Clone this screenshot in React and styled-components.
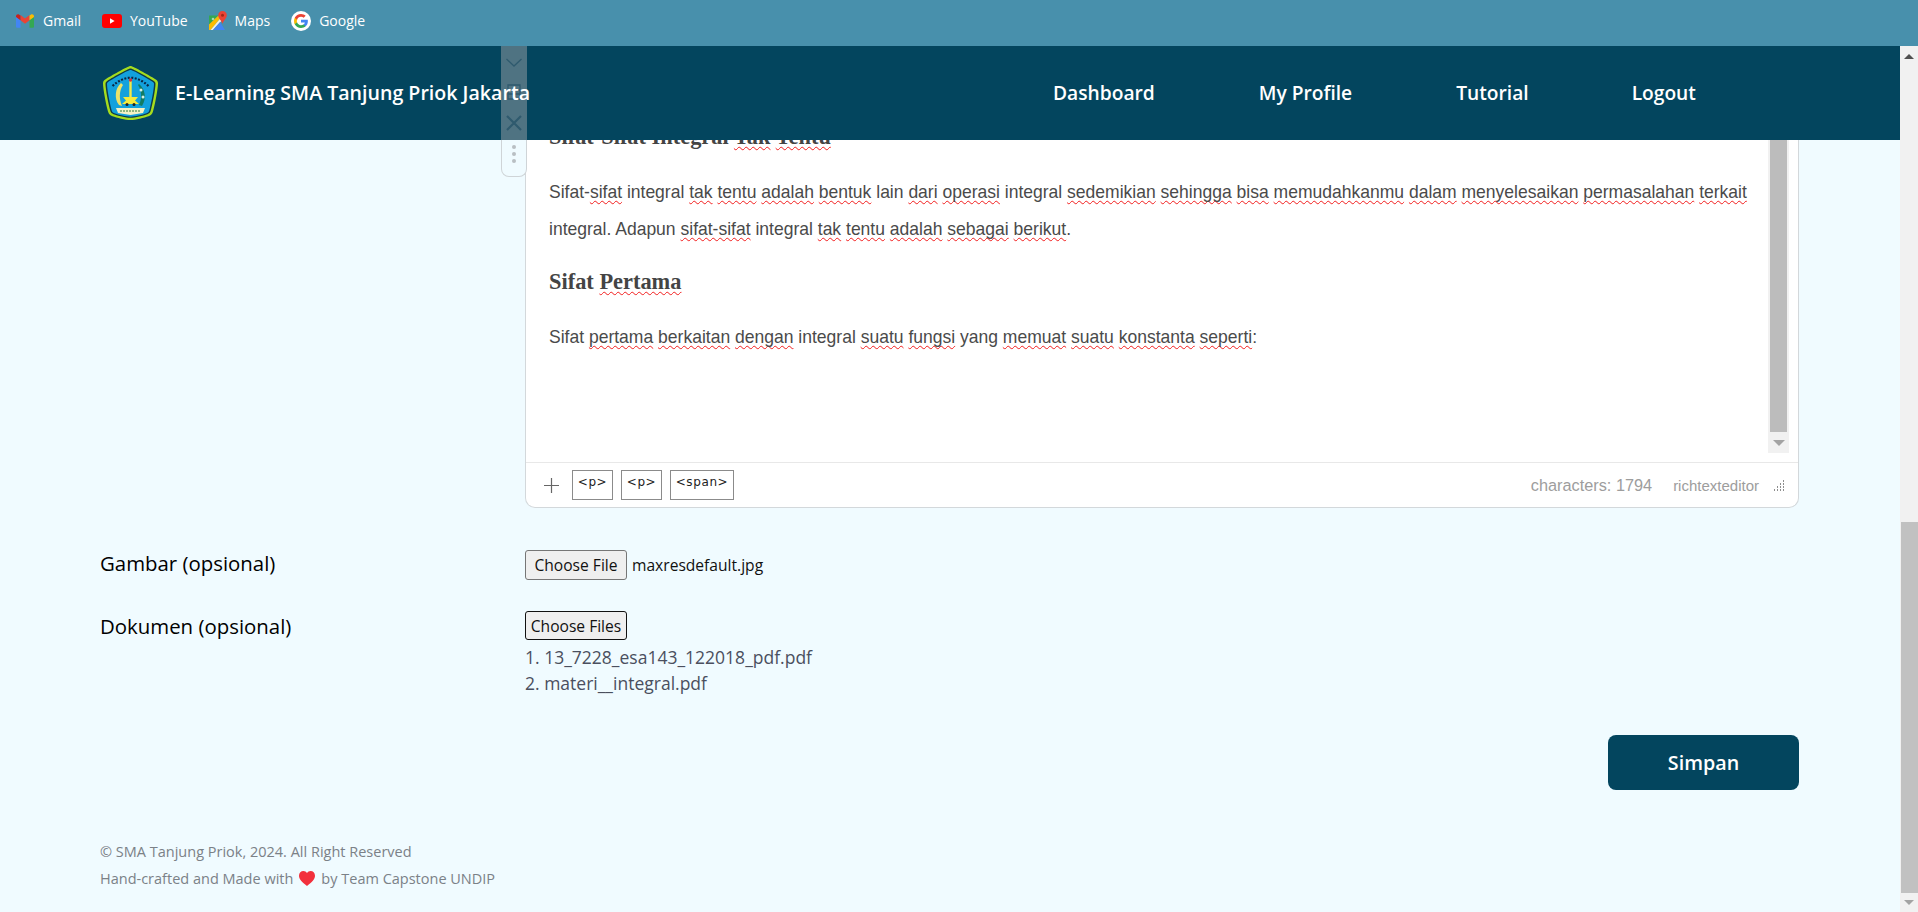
import React from "react";
import styled, { createGlobalStyle } from "styled-components";

const Global = createGlobalStyle`
  html, body { margin: 0; padding: 0; height: 100%; overflow: hidden; }
  body { font-family: "Open Sans", sans-serif; background: #f0fbff; }
  * { box-sizing: border-box; }
`;
const Shell = styled.div`display:flex;flex-direction:column;height:912px;width:1918px;position:relative;overflow:hidden;`;
const Bookmarks = styled.div`height:46px;background:#4890ac;display:flex;align-items:center;padding:0 0 5px 16px;flex:none;`;
const Bookmark = styled.div`display:flex;align-items:center;gap:${p=>p.$gap||8}px;margin-right:${p=>p.$mr||21}px;color:#fff;font:400 14px "Open Sans",sans-serif;`;
const Viewport = styled.div`flex:1;display:flex;min-height:0;`;
const Page = styled.div`width:1900px;display:flex;flex-direction:column;min-height:0;`;
const PageBar = styled.div`width:18px;background:#f1f1f1;display:flex;flex-direction:column;align-items:flex-end;`;
const BarArrow = styled.div`height:${p=>p.$h}px;width:100%;display:flex;align-items:center;justify-content:center;flex:none;`;
const Tri = styled.div`width:0;height:0;border-left:${p=>p.$s||5}px solid transparent;border-right:${p=>p.$s||5}px solid transparent;${p=>p.$up?`border-bottom:${p.$t||5}px solid ${p.$c||"#505050"};`:`border-top:${p.$t||5}px solid ${p.$c||"#a3a3a3"};`}`;
const BarGap = styled.div`flex:1;`;
const BarThumb = styled.div`width:17px;height:371px;background:#c1c1c1;flex:none;`;
const Nav = styled.nav`height:94px;background:#03455e;display:flex;align-items:center;padding-left:103px;flex:none;position:relative;`;
const Title = styled.div`margin:-2px 0 0 17px;color:#fff;font:600 19.6px "Open Sans",sans-serif;white-space:nowrap;position:relative;z-index:3;width:354px;`;
const NavLinks = styled.div`display:flex;margin:-2px 0 0 524px;`;
const NavLink = styled.a`color:#fff;font:600 19.2px "Open Sans",sans-serif;margin-right:${p=>p.$mr}px;white-space:nowrap;`;
const Main = styled.main`flex:1;min-height:0;overflow:hidden;padding:0 101px 0 100px;`;
const Row = styled.div`display:grid;grid-template-columns:425px 1fr;margin-top:${p=>p.$mt||0}px;`;
const Label = styled.div`color:#000;font:500 20.4px/28px "Open Sans",sans-serif;margin-top:${p=>p.$mt||0}px;`;
const Editor = styled.div`height:368px;background:#fff;border:1px solid #d3d8db;border-top:none;border-radius:0 0 10px 10px;display:flex;flex-direction:column;overflow:hidden;`;
const EditorBody = styled.div`flex:1;min-height:0;display:flex;padding:0 9px 9px 23px;border-bottom:1px solid #e8e8e8;`;
const EditorText = styled.div`flex:1;min-width:0;overflow:hidden;color:#4a4a4a;font:400 17.52px/36.8px "Liberation Sans",Arial,sans-serif;padding-right:18px;`;
const CutHeading = styled.h2`margin:-17px 0 0;color:#444;font:700 22.4px/28px "Liberation Serif",serif;`;
const SubHeading = styled.h3`margin:16px 0 0;color:#444;font:700 22.4px/36px "Liberation Serif",serif;`;
const Para = styled.p`margin:${p=>p.$mt}px 0 0;`;
const Wavy = styled.span`text-decoration:underline wavy #f21d1d 1px;text-underline-offset:2px;text-decoration-skip-ink:none;`;
const EditorBar = styled.div`width:21px;background:#f1f1f1;display:flex;flex-direction:column;align-items:center;flex:none;`;
const EditorThumb = styled.div`width:17px;flex:1;background:#bcbcbc;`;
const EditorFoot = styled.div`height:44px;display:flex;align-items:center;padding:0 13px 0 18px;`;
const Plus = styled.div`width:15px;height:15px;margin-right:13px;flex:none;display:flex;`;
const Tag = styled.div`height:30px;width:${p=>p.$w}px;margin-right:8px;border:1px solid #8b8b8b;font:400 12px/22px "DejaVu Sans",sans-serif;letter-spacing:.6px;color:#222;text-align:center;`;
const Spacer = styled.div`flex:1;`;
const Count = styled.div`color:#9d9d9d;font:400 16.3px "Liberation Sans",Arial,sans-serif;margin:1px 21px 0 0;`;
const Brand = styled.div`color:#9d9d9d;font:400 15px "Liberation Sans",Arial,sans-serif;margin-right:14px;`;
const Grip = styled.svg`width:12px;height:12px;flex:none;`;
const FileLine = styled.div`display:flex;align-items:center;gap:5px;`;
const FileBtn = styled.button`width:102px;height:${p=>p.$h}px;padding:0;border-radius:3px;background:#efefef;color:#111;border:${p=>p.$focus?"1.5px solid #111":"1px solid #767676"};font:400 15.6px "Open Sans",sans-serif;`;
const FileName = styled.span`color:#111;font:400 15.6px "Open Sans",sans-serif;`;
const FileList = styled.div`color:#4a4f5e;font:400 17.5px/25.5px "Open Sans",sans-serif;margin-top:5px;`;
const Actions = styled.div`display:flex;justify-content:flex-end;margin-top:39px;`;
const Save = styled.button`width:191px;height:55px;background:#03455e;border:none;border-radius:8px;color:#fff;font:600 19.7px "Open Sans",sans-serif;`;
const Footer = styled.footer`margin-top:48px;color:#7b8187;font:400 14.5px/27px "Open Sans",sans-serif;`;
const FootLine = styled.div`display:flex;align-items:center;`;
const Heart = styled.svg`width:16px;height:15px;margin:0 6px;flex:none;`;
const FloatBar = styled.div`position:absolute;left:501px;top:46px;width:26px;height:131px;z-index:2;display:flex;flex-direction:column;`;
const FloatTop = styled.div`height:94px;background:#4f7382;display:flex;flex-direction:column;align-items:center;`;
const FloatBottom = styled.div`flex:1;background:#f0fbff;border:1px solid #cfd4d7;border-top:none;border-radius:0 0 8px 8px;display:flex;flex-direction:column;align-items:center;gap:3px;padding-top:5px;`;
const Dot = styled.div`width:4px;height:4px;border-radius:50%;background:#b9bfc3;`;
const FloatIcon = styled.svg`width:18px;height:${p=>p.$h}px;margin-top:${p=>p.$mt||0}px;flex:none;`;

const Spell = ({ t }) => t.split(/(~[^~]+~)/).map((s, i) => s.startsWith("~") ? <Wavy key={i}>{s.slice(1, -1)}</Wavy> : s);

const Gmail = () => <svg width="18" height="14" viewBox="0 0 24 18"><path fill="#4285f4" d="M0 3v13.2C0 17.2.8 18 1.8 18H6V8z"/><path fill="#34a853" d="M18 8v10h4.2c1 0 1.8-.8 1.8-1.8V3z"/><path fill="#ea4335" d="M6 8V1L12 5.500 18 1v7l-6 4.500z"/><path fill="#c5221f" d="M0 2.700C0 .5 2.500-.8 4.300.6L6 1.800V8L0 3.500z"/><path fill="#fbbc04" d="M18 1.800 19.700.6C21.500-.8 24 .5 24 2.700v.8L18 8z"/></svg>;
const YouTube = () => <svg width="20" height="14" viewBox="0 0 20 14"><rect width="20" height="14" rx="3" fill="#f00"/><path fill="#fff" d="M8 4.300v5.400L12.600 7z"/></svg>;
const Maps = () => <svg width="18" height="20" viewBox="0 0 18 20"><path fill="#34a853" d="M0 4.500h9.500L0 13.500z"/><circle cx="4" cy="8" r="1.300" fill="#a8dab5"/><path fill="#fbbc04" d="M0 13.500 9.500 4.500l1.800 3L1.500 19H0z"/><path fill="#f1f0e4" d="M1.500 19 11.300 7.500 12.300 10 4 19z"/><path fill="#4285f4" d="M4 19 11 11l5 8z"/><path fill="#ea4335" d="M13.500 0C11 0 9.200 1.900 9.200 4.200c0 3 3 4.600 4.300 8.600 1.300-4 4.300-5.600 4.300-8.600C17.800 1.900 16 0 13.500 0z"/><circle cx="13.500" cy="4.200" r="1.500" fill="#a52714"/></svg>;
const Google = () => <svg width="20" height="20" viewBox="0 0 20 20"><circle cx="10" cy="10" r="10" fill="#fff"/><g transform="translate(3 3) scale(.2917)"><path fill="#4285F4" d="M47.500 24.600c0-1.600-.1-3.100-.4-4.600H24v8.900h13.200c-.6 3-2.300 5.500-4.800 7.200v6h7.700c4.500-4.200 7.400-10.300 7.400-17.500z"/><path fill="#34A853" d="M24 48c6.500 0 11.900-2.100 15.900-5.800l-7.700-6c-2.100 1.400-4.900 2.300-8.200 2.300-6.300 0-11.600-4.200-13.500-9.900H2.600v6.200C6.500 42.600 14.600 48 24 48z"/><path fill="#FBBC05" d="M10.500 28.600c-.5-1.400-.8-3-.8-4.600s.3-3.200.8-4.600v-6.200H2.600C1 16.400 0 20.100 0 24s1 7.600 2.600 10.800z"/><path fill="#EA4335" d="M24 9.500c3.500 0 6.700 1.200 9.200 3.600l6.800-6.800C35.900 2.400 30.500 0 24 0 14.600 0 6.500 5.400 2.600 13.200l7.900 6.200C12.400 13.700 17.700 9.500 24 9.500z"/></g></svg>;
const Logo = () => (
  <svg width="55" height="54" viewBox="0 0 55 54" style={{ flex: "none" }}>
    <path d="M27.500 0C30 0 49 11 52 13c2.500 1.500 3 2.500 3 4.500 0 5-3 21-5 28-.8 2.800-2 3.700-4.500 4.700-4 1.500-13 3.800-18 3.800s-14-2.300-18-3.800C7 49.200 5.800 48.300 5 45.500c-2-7-5-23-5-28 0-2 .5-3 3-4.500C6 11 25 0 27.500 0z" fill="#a5dc1e" />
    <path d="M27.500 2.500C30 2.500 48 13 50.500 14.800c1.500 1 2 1.800 2 3 0 5-2.800 20-4.800 27-.6 2-1.500 2.700-3.200 3.400-4 1.500-12.500 3.500-17 3.500s-13-2-17-3.500c-1.700-.7-2.600-1.400-3.200-3.400-2-7-4.800-22-4.800-27 0-1.200.5-2 2-3C7 13 25 2.500 27.500 2.500z" fill="#0d3a4a" />
    <path d="M27.500 4C30 4 47 14 49.500 15.800c1 .7 1.500 1.200 1.500 2.200 0 5-2.800 19.500-4.700 26.500-.5 1.500-1.200 2.200-2.700 2.800-4 1.500-12 3.400-16.100 3.400s-12.100-1.900-16.100-3.400c-1.500-.6-2.200-1.300-2.700-2.800C6.800 37.500 4 23 4 18c0-1 .5-1.500 1.500-2.200C8 14 25 4 27.500 4z" fill="#13a1dd" />
    <path d="M9.500 20Q27.500 3.500 45.500 20" fill="none" stroke="#0b2744" strokeWidth="2.200" strokeDasharray="2 1.500" />
    <rect x="26.300" y="15" width="2.400" height="17" fill="#f1e94a" />
    <circle cx="27.500" cy="14" r="1.700" fill="#d8343c" />
    <path d="M20 31h15l-3 3.500 4 3.500H19l4-3.500z" fill="#f3ea3d" />
    <path d="M18 17c-6 5-7 16-2 22l3 1c-3-7-3-15 1-21z" fill="#ece36a" />
    <path d="M36 18c6 5 8 14 3 22l-3-1c3-6 3-14-1-20z" fill="#127c63" />
    <circle cx="38" cy="24" r="1.500" fill="#d6efe6" /><circle cx="40" cy="31" r="1.500" fill="#d6efe6" />
    <path d="M13 42 42 42 40 47 27.500 49 15 47z" fill="#f4f2c5" />
    <path d="M17 45h21" stroke="#2f7d3a" strokeWidth="1.200" strokeDasharray="2 1" />
    <circle cx="24" cy="38.500" r="1.500" fill="#222" /><circle cx="31" cy="38.500" r="1.500" fill="#222" />
  </svg>
);

export default function App() {
  return (
    <Shell>
      <Global />
      <Bookmarks>
        <Bookmark $gap={9} $mr={21}><Gmail />Gmail</Bookmark>
        <Bookmark $gap={8} $mr={21}><YouTube />YouTube</Bookmark>
        <Bookmark $gap={8} $mr={21}><Maps />Maps</Bookmark>
        <Bookmark $gap={8}><Google />Google</Bookmark>
      </Bookmarks>
      <FloatBar>
        <FloatTop>
          <FloatIcon $h={12} $mt={10} viewBox="0 0 18 12"><path d="M1.500 3 9 10l7.500-7" fill="none" stroke="#2f5a6e" strokeWidth="1.300" /></FloatIcon>
          <FloatIcon $h={18} $mt={15} viewBox="0 0 18 18"><path d="M3 2h12v14H3zM3 7h12M3 11h12" fill="none" stroke="#2f5a6e" strokeWidth="1.300" /></FloatIcon>
          <FloatIcon $h={18} $mt={13} viewBox="0 0 18 18"><path d="M2 2l14 14M16 2 2 16" fill="none" stroke="#2f5a6e" strokeWidth="2.200" /></FloatIcon>
        </FloatTop>
        <FloatBottom><Dot /><Dot /><Dot /></FloatBottom>
      </FloatBar>
      <Viewport>
        <Page>
          <Nav>
            <Logo />
            <Title>E-Learning SMA Tanjung Priok Jakarta</Title>
            <NavLinks>
              <NavLink $mr={104}>Dashboard</NavLink>
              <NavLink $mr={104}>My Profile</NavLink>
              <NavLink $mr={103}>Tutorial</NavLink>
              <NavLink $mr={0}>Logout</NavLink>
            </NavLinks>
          </Nav>
          <Main>
            <Row>
              <div />
              <Editor>
                <EditorBody>
                  <EditorText>
                    <CutHeading><Spell t="Sifat-Sifat Integral ~Tak~ ~Tentu~" /></CutHeading>
                    <Para $mt={23}><Spell t="Sifat-~sifat~ integral ~tak~ ~tentu~ ~adalah~ ~bentuk~ lain ~dari~ ~operasi~ integral ~sedemikian~ ~sehingga~ ~bisa~ ~memudahkanmu~ ~dalam~ ~menyelesaikan~ ~permasalahan~ ~terkait~ integral. Adapun ~sifat-sifat~ integral ~tak~ ~tentu~ ~adalah~ ~sebagai~ ~berikut~." /></Para>
                    <SubHeading>Sifat <Wavy>Pertama</Wavy></SubHeading>
                    <Para $mt={19}><Spell t="Sifat ~pertama~ ~berkaitan~ ~dengan~ integral ~suatu~ ~fungsi~ yang ~memuat~ ~suatu~ ~konstanta~ ~seperti~:" /></Para>
                  </EditorText>
                  <EditorBar>
                    <EditorThumb />
                    <BarArrow $h={21}><Tri $s={6} $t={6} /></BarArrow>
                  </EditorBar>
                </EditorBody>
                <EditorFoot>
                  <Plus><svg width="15" height="15" viewBox="0 0 15 15"><path d="M7.500 0v15M0 7.500h15" stroke="#666" strokeWidth="1.200" /></svg></Plus>
                  <Tag $w={41}>&lt;p&gt;</Tag>
                  <Tag $w={41}>&lt;p&gt;</Tag>
                  <Tag $w={64}>&lt;span&gt;</Tag>
                  <Spacer />
                  <Count>characters: 1794</Count>
                  <Brand>richtexteditor</Brand>
                  <Grip viewBox="0 0 12 12"><path d="M1 11h1M4 11h1M7 11h1M10 11h1M4 8h1M7 8h1M10 8h1M7 5h1M10 5h1M10 2h1" stroke="#8e8e8e" strokeWidth="2" fill="none" /></Grip>
                </EditorFoot>
              </Editor>
            </Row>
            <Row $mt={42}>
              <Label $mt={-1}>Gambar (opsional)</Label>
              <FileLine>
                <FileBtn $h={30}>Choose File</FileBtn>
                <FileName>maxresdefault.jpg</FileName>
              </FileLine>
            </Row>
            <Row $mt={31}>
              <Label $mt={1}>Dokumen (opsional)</Label>
              <div>
                <FileBtn $h={29} $focus>Choose Files</FileBtn>
                <FileList>
                  <div>1. 13_7228_esa143_122018_pdf.pdf</div>
                  <div>2. materi__integral.pdf</div>
                </FileList>
              </div>
            </Row>
            <Actions><Save>Simpan</Save></Actions>
            <Footer>
              <div>© SMA Tanjung Priok, 2024. All Right Reserved</div>
              <FootLine>Hand-crafted and Made with
                <Heart viewBox="0 0 16 15"><path fill="#f2303c" d="M8 15C3 11 0 8.300 0 4.800 0 2 2 0 4.400 0 5.900 0 7.200.8 8 2 8.800.8 10.100 0 11.600 0 14 0 16 2 16 4.800 16 8.300 13 11 8 15z" /></Heart>
                by Team Capstone UNDIP
              </FootLine>
            </Footer>
          </Main>
        </Page>
        <PageBar>
          <BarArrow $h={21}><Tri $up $s={5} $t={5} /></BarArrow>
          <BarGap />
          <BarThumb />
          <BarArrow $h={19}><Tri $s={5} $t={5} /></BarArrow>
        </PageBar>
      </Viewport>
    </Shell>
  );
}
